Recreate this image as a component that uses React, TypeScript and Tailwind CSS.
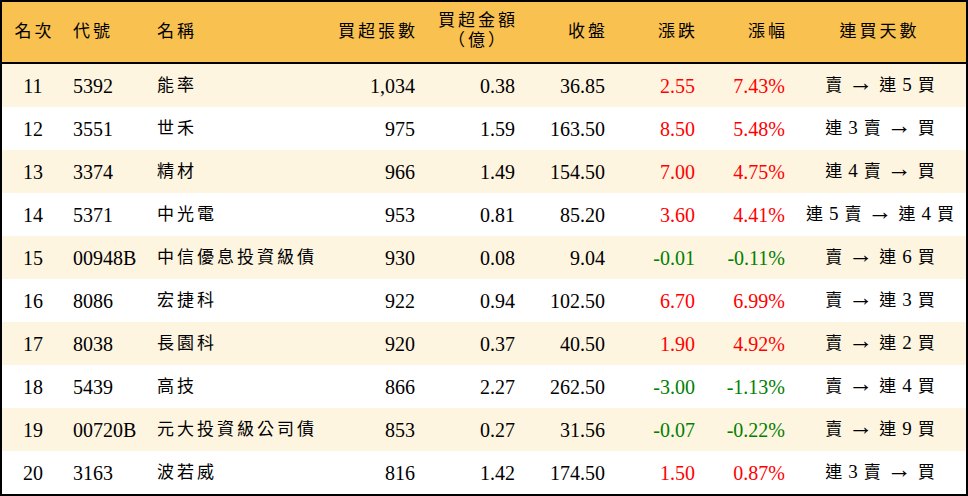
const rows = [
  { rank: 11, code: "5392", name: "能率", vol: "1,034", amt: "0.38", close: "36.85", chg: "2.55", pct: "7.43%", streak: "賣 → 連 5 買" },
  { rank: 12, code: "3551", name: "世禾", vol: "975", amt: "1.59", close: "163.50", chg: "8.50", pct: "5.48%", streak: "連 3 賣 → 買" },
  { rank: 13, code: "3374", name: "精材", vol: "966", amt: "1.49", close: "154.50", chg: "7.00", pct: "4.75%", streak: "連 4 賣 → 買" },
  { rank: 14, code: "5371", name: "中光電", vol: "953", amt: "0.81", close: "85.20", chg: "3.60", pct: "4.41%", streak: "連 5 賣 → 連 4 買" },
  { rank: 15, code: "00948B", name: "中信優息投資級債", vol: "930", amt: "0.08", close: "9.04", chg: "-0.01", pct: "-0.11%", streak: "賣 → 連 6 買" },
  { rank: 16, code: "8086", name: "宏捷科", vol: "922", amt: "0.94", close: "102.50", chg: "6.70", pct: "6.99%", streak: "賣 → 連 3 買" },
  { rank: 17, code: "8038", name: "長園科", vol: "920", amt: "0.37", close: "40.50", chg: "1.90", pct: "4.92%", streak: "賣 → 連 2 買" },
  { rank: 18, code: "5439", name: "高技", vol: "866", amt: "2.27", close: "262.50", chg: "-3.00", pct: "-1.13%", streak: "賣 → 連 4 買" },
  { rank: 19, code: "00720B", name: "元大投資級公司債", vol: "853", amt: "0.27", close: "31.56", chg: "-0.07", pct: "-0.22%", streak: "賣 → 連 9 買" },
  { rank: 20, code: "3163", name: "波若威", vol: "816", amt: "1.42", close: "174.50", chg: "1.50", pct: "0.87%", streak: "連 3 賣 → 買" },
];

const grid = "grid grid-cols-[62px_86px_180px_90px_100px_90px_90px_90px_1fr] items-center";
const cjk = "tracking-[3px] text-[17px]";

// 連買天數: tokens spaced apart, arrow drawn with a wider glyph
const Streak = ({ text }: { text: string }) => (
  <div className="flex items-center justify-center gap-[6px] pl-[4px] whitespace-nowrap">
    {text.split(" ").map((t, i) =>
      t === "→" ? (
        <span key={i} className="text-[25px] leading-none -translate-y-[3px]">
          →
        </span>
      ) : /\d/.test(t) ? (
        <span key={i} className="text-[19px]">{t}</span>
      ) : (
        <span key={i} className="text-[17px]">{t}</span>
      )
    )}
  </div>
);

export default function App() {
  return (
    <div
      className="w-[968px] h-[496px] bg-white border-2 border-black text-black overflow-hidden"
      style={{ fontFamily: '"Liberation Serif", "Noto Sans CJK TC", serif' }}
    >
      <div className={`${grid} h-[62px] bg-[#f9c150] border-b-2 border-black ${cjk}`}>
        <div className="text-center pl-[3px]">名次</div>
        <div className="pl-[9px]">代號</div>
        <div className="pl-[7px]">名稱</div>
        <div className="text-right pr-[2px]">買超張數</div>
        <div className="text-right pr-[2px]">
          <span className="inline-block text-center leading-[20px]">
            買超金額
            <br />（億）
          </span>
        </div>
        <div className="text-right pr-[2px]">收盤</div>
        <div className="text-right pr-[2px]">漲跌</div>
        <div className="text-right pr-[2px]">漲幅</div>
        <div className="text-center pl-[3px]">連買天數</div>
      </div>
      {rows.map((r, i) => {
        const color = r.chg.startsWith("-") ? "text-[#008000]" : "text-[#ff0000]";
        return (
          <div key={r.rank} className={`${grid} h-[43px] text-[20px] ${i % 2 === 0 ? "bg-[#fef5e1]" : "bg-white"}`}>
            <div className="text-center">{r.rank}</div>
            <div className="pl-[9px]">{r.code}</div>
            <div className={`pl-[7px] ${cjk}`}>{r.name}</div>
            <div className="text-right pr-[5px]">{r.vol}</div>
            <div className="text-right pr-[5px]">{r.amt}</div>
            <div className="text-right pr-[5px]">{r.close}</div>
            <div className={`text-right pr-[5px] ${color}`}>{r.chg}</div>
            <div className={`text-right pr-[5px] ${color}`}>{r.pct}</div>
            <Streak text={r.streak} />
          </div>
        );
      })}
    </div>
  );
}
